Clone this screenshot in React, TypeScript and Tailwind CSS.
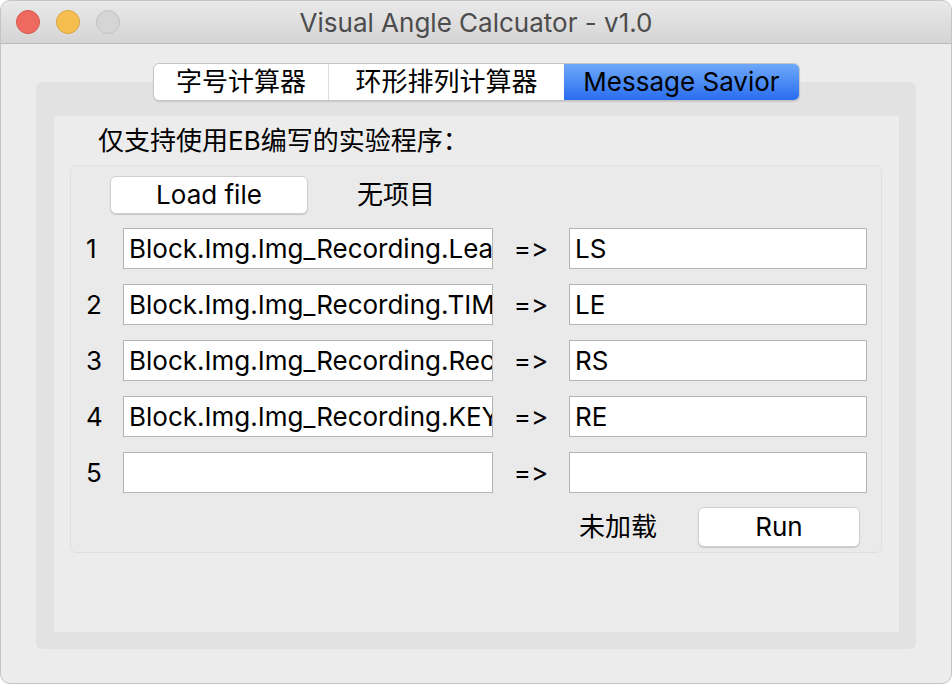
import React from "react";

const rows = [
  { n: "1", src: "Block.Img.Img_Recording.LeaveStart", dst: "LS" },
  { n: "2", src: "Block.Img.Img_Recording.TIME", dst: "LE" },
  { n: "3", src: "Block.Img.Img_Recording.RecStart", dst: "RS" },
  { n: "4", src: "Block.Img.Img_Recording.KEYPRESS", dst: "RE" },
  { n: "5", src: "", dst: "" },
];

const Field = ({ value, w }: { value: string; w: string }) => (
  <div
    className={`${w} shrink-0 h-[41px] bg-white border border-[#b4b4b4] pl-[5px] overflow-hidden whitespace-nowrap flex items-center text-[26px] text-black leading-none`}
  >
    {value}
  </div>
);

const App = () => {
  return (
    <div className="w-[952px] h-[684px] bg-white font-['Inter','Noto_Sans_CJK_SC',sans-serif] [font-feature-settings:'calt'_0]">
      <div className="w-full h-full rounded-[10px] overflow-hidden bg-[#ececec] flex flex-col border border-[#c4c4c4]">
        {/* title bar */}
        <div className="h-[43px] shrink-0 relative flex items-center justify-center bg-gradient-to-b from-[#e9e9e9] to-[#d4d4d4] border-b border-[#bcbcbc]">
          <div className="absolute left-[15px] top-[9px] flex gap-[16px]">
            <div className="w-[24px] h-[24px] rounded-full bg-[#ee6a5f] border border-[#d5574c]" />
            <div className="w-[24px] h-[24px] rounded-full bg-[#f6be4f] border border-[#d9a43f]" />
            <div className="w-[24px] h-[24px] rounded-full bg-[#d5d5d5] border border-[#c0c0c0]" />
          </div>
          <span className="pt-[2px] text-[26px] text-[#4c4c4c] leading-none">Visual Angle Calcuator - v1.0</span>
        </div>

        {/* body */}
        <div className="flex flex-col pt-[19px] pl-[35px]">
          {/* tabs */}
          <div className="relative z-10 flex self-start ml-[117px] h-[38px] rounded-[6px] border border-[#c6c6c6] bg-white shadow-[0_1px_1px_rgba(0,0,0,0.12)] overflow-hidden text-[26px] leading-none text-black">
            <div className="w-[175px] flex items-center justify-center border-r border-[#dcdcdc]">字号计算器</div>
            <div className="w-[235px] flex items-center justify-center">环形排列计算器</div>
            <div className="w-[235px] flex items-center justify-center bg-gradient-to-b from-[#6ea8f8] to-[#2a6cf0]">Message Savior</div>
          </div>

          {/* pane */}
          <div className="-mt-[19px] w-[880px] h-[567px] rounded-[6px] bg-[#e2e2e2] pt-[34px] pl-[18px] pr-[17px] pb-[17px]">
            <div className="w-full h-full bg-[#ececec] pt-[12px] pl-[16px] pr-[17px]">
              <div className="pl-[28px] h-[26px] text-[26px] leading-none text-black">仅支持使用EB编写的实验程序：</div>
              <div className="mt-[11px] rounded-[6px] border border-[#dfdfdf] bg-[#eaeaea] pt-[10px] pb-[5px] pl-[15px] pr-[14px] flex flex-col">
                <div className="flex items-center pl-[24px]">
                  <div className="w-[198px] h-[38px] rounded-[6px] bg-white border border-[#cfcfcf] shadow-[0_1px_1px_rgba(0,0,0,0.15)] flex items-center justify-center text-[26px] leading-none text-black">
                    Load file
                  </div>
                  <span className="ml-[49px] text-[26px] leading-none text-black">无项目</span>
                </div>
                <div className="mt-[14px] flex flex-col gap-[15px]">
                  {rows.map((r) => (
                    <div key={r.n} className="flex items-center text-[26px] leading-none text-black">
                      <span className="w-[37px] shrink-0">{r.n}</span>
                      <Field value={r.src} w="w-[370px]" />
                      <span className="w-[76px] shrink-0 text-center">=&gt;</span>
                      <Field value={r.dst} w="w-[298px]" />
                    </div>
                  ))}
                </div>
                <div className="mt-[14px] mr-[7px] flex items-center justify-end">
                  <span className="text-[26px] leading-none text-black">未加载</span>
                  <div className="ml-[41px] w-[162px] h-[40px] rounded-[6px] bg-white border border-[#cfcfcf] shadow-[0_1px_1px_rgba(0,0,0,0.15)] flex items-center justify-center text-[26px] leading-none text-black">
                    Run
                  </div>
                </div>
              </div>
            </div>
          </div>
        </div>
      </div>
    </div>
  );
};

export default App;
